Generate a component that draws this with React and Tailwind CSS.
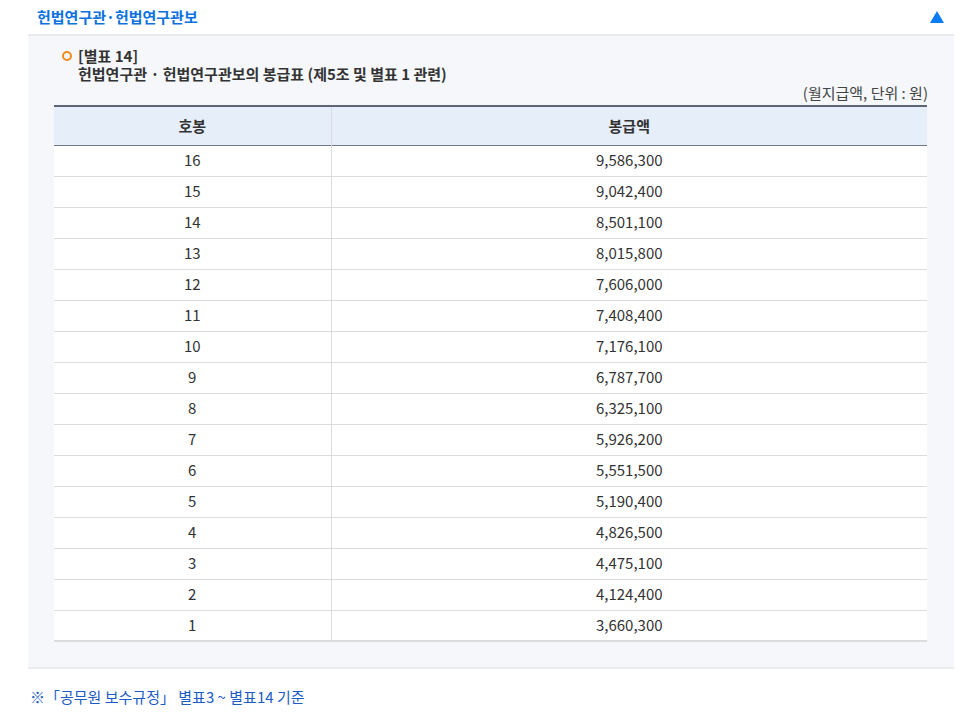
import React from "react";

const rows = [
  ["16", "9,586,300"],
  ["15", "9,042,400"],
  ["14", "8,501,100"],
  ["13", "8,015,800"],
  ["12", "7,606,000"],
  ["11", "7,408,400"],
  ["10", "7,176,100"],
  ["9", "6,787,700"],
  ["8", "6,325,100"],
  ["7", "5,926,200"],
  ["6", "5,551,500"],
  ["5", "5,190,400"],
  ["4", "4,826,500"],
  ["3", "4,475,100"],
  ["2", "4,124,400"],
  ["1", "3,660,300"],
];

export default function App() {
  return (
    <div
      className="w-[966px] h-[721px] bg-white text-[#333]"
      style={{ fontFamily: '"Noto Sans CJK KR", "Noto Sans", sans-serif' }}
    >
      <div className="flex items-center justify-between h-[34px] pl-[37px] pr-[22px]">
        <span className="text-[15px] font-bold text-[#0b72e0]">
          헌법연구관·헌법연구관보
        </span>
        <svg width="14" height="12" viewBox="0 0 14 12">
          <polygon points="7,0 14,12 0,12" fill="#0a7cf5" />
        </svg>
      </div>
      <div className="ml-[28px] w-[926px] bg-[#f5f7fb] border-t-2 border-b-2 border-[#e9ebef] px-[26px] pt-[11px] pb-[25px]">
        <div className="flex items-start gap-[6px] pl-[8px]">
          <span className="mt-[4px] w-[10px] h-[10px] rounded-full border-[2.5px] border-[#f08a1c] shrink-0" />
          <div className="text-[15px] font-semibold leading-[18px] text-[#333]">
            <div>[별표 14]</div>
            <div>헌법연구관 · 헌법연구관보의 봉급표 (제5조 및 별표 1 관련)</div>
          </div>
        </div>
        <div className="text-right text-[15px] leading-[18px] mt-[1px] mb-[3px] text-[#444]">
          (월지급액, 단위 : 원)
        </div>
        <table className="w-[873px] border-collapse bg-white text-[15px]">
          <thead>
            <tr className="bg-[#e6eefa] border-t-2 border-[#5e6676] border-b border-b-[#6e7584]">
              <th className="w-[277px] h-[39px] font-bold text-[15px] text-[#333] border-r border-[#d9dde3]">
                호봉
              </th>
              <th className="h-[39px] font-bold text-[15px] text-[#333]">봉급액</th>
            </tr>
          </thead>
          <tbody>
            {rows.map(([a, b], i) => (
              <tr
                key={a}
                className={
                  i === rows.length - 1
                    ? "border-b-2 border-[#dcdcdc]"
                    : "border-b border-[#dcdcdc]"
                }
              >
                <td className="h-[31px] text-center border-r border-[#dcdcdc] text-[#333]">{a}</td>
                <td className="h-[31px] text-center text-[#333]">{b}</td>
              </tr>
            ))}
          </tbody>
        </table>
      </div>
      <div className="pl-[30px] pt-[17px] text-[15px] text-[#1d5cc5]">
        ※「공무원 보수규정」 별표3 ~ 별표14 기준
      </div>
    </div>
  );
}
